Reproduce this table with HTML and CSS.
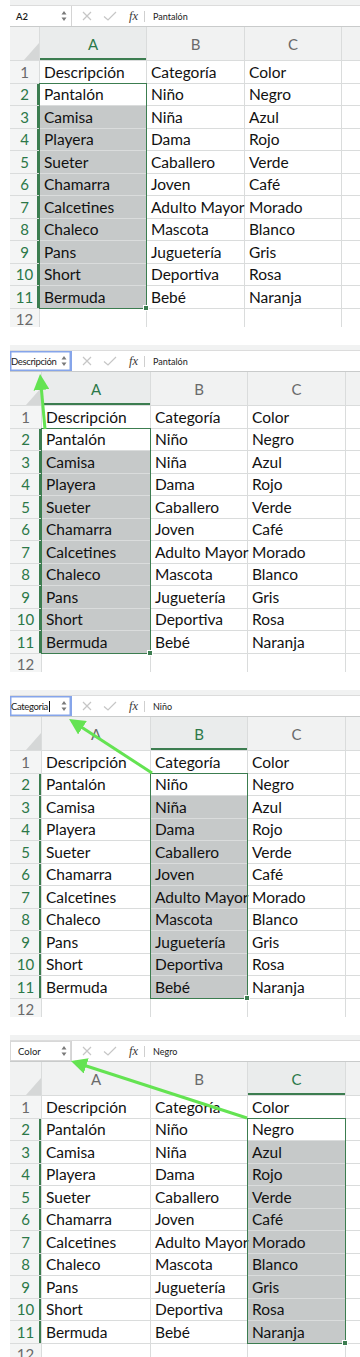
FILE: index.html
```html
<!DOCTYPE html>
<html lang="es">
<head>
<meta charset="utf-8">
<title>Excel cuadro de nombres</title>
<link rel="stylesheet" href="styles.css">
</head>
<body>
<main class="stack">

  <!-- Panel 1 -->
  <section class="sheet">
    <div class="fbar">
      <div class="namebox"><span class="nb-text">A2</span><svg class="spin" viewBox="0 0 6 12" width="6" height="12"><path d="M3 1 L5.5 4.6 L0.5 4.6Z M0.5 7.4 L5.5 7.4 L3 11Z"/></svg></div>
      <div class="fbtns">
        <svg class="ico-x" viewBox="0 0 10 10" width="10" height="10"><path d="M1 1 L9 9 M9 1 L1 9"/></svg>
        <svg class="ico-ok" viewBox="0 0 14 10" width="14" height="10"><path d="M1 5.5 L5 9 L13 1"/></svg>
        <span class="fx">fx</span>
      </div>
      <span class="fdiv"></span>
      <div class="finput">Pantalón</div>
    </div>
    <div class="grid grid--first">
      <div class="corner"></div><div class="ch on">A</div><div class="ch">B</div><div class="ch">C</div><div class="ch"></div>
      <div class="rh">1</div><div class="c">Descripción</div><div class="c">Categoría</div><div class="c">Color</div><div class="c"></div>
      <div class="rh on">2</div><div class="c">Pantalón</div><div class="c">Niño</div><div class="c">Negro</div><div class="c"></div>
      <div class="rh on">3</div><div class="c g">Camisa</div><div class="c">Niña</div><div class="c">Azul</div><div class="c"></div>
      <div class="rh on">4</div><div class="c g">Playera</div><div class="c">Dama</div><div class="c">Rojo</div><div class="c"></div>
      <div class="rh on">5</div><div class="c g">Sueter</div><div class="c">Caballero</div><div class="c">Verde</div><div class="c"></div>
      <div class="rh on">6</div><div class="c g">Chamarra</div><div class="c">Joven</div><div class="c">Café</div><div class="c"></div>
      <div class="rh on">7</div><div class="c g">Calcetines</div><div class="c ov">Adulto Mayor</div><div class="c">Morado</div><div class="c"></div>
      <div class="rh on">8</div><div class="c g">Chaleco</div><div class="c">Mascota</div><div class="c">Blanco</div><div class="c"></div>
      <div class="rh on">9</div><div class="c g">Pans</div><div class="c">Juguetería</div><div class="c">Gris</div><div class="c"></div>
      <div class="rh on">10</div><div class="c g">Short</div><div class="c">Deportiva</div><div class="c">Rosa</div><div class="c"></div>
      <div class="rh on">11</div><div class="c g">Bermuda</div><div class="c">Bebé</div><div class="c">Naranja</div><div class="c"></div>
      <div class="rh">12</div><div class="c"></div><div class="c"></div><div class="c"></div><div class="c"></div>
      <div class="selbox selbox--a"></div>
    </div>
  </section>

  <!-- Panel 2 -->
  <section class="sheet">
    <div class="fbar">
      <div class="namebox namebox--focus"><span class="nb-text nb-tight">Descripción</span><svg class="spin" viewBox="0 0 6 12" width="6" height="12"><path d="M3 1 L5.5 4.6 L0.5 4.6Z M0.5 7.4 L5.5 7.4 L3 11Z"/></svg></div>
      <div class="fbtns">
        <svg class="ico-x" viewBox="0 0 10 10" width="10" height="10"><path d="M1 1 L9 9 M9 1 L1 9"/></svg>
        <svg class="ico-ok" viewBox="0 0 14 10" width="14" height="10"><path d="M1 5.5 L5 9 L13 1"/></svg>
        <span class="fx">fx</span>
      </div>
      <span class="fdiv"></span>
      <div class="finput">Pantalón</div>
    </div>
    <div class="grid">
      <div class="corner"></div><div class="ch on">A</div><div class="ch">B</div><div class="ch">C</div><div class="ch"></div>
      <div class="rh">1</div><div class="c">Descripción</div><div class="c">Categoría</div><div class="c">Color</div><div class="c"></div>
      <div class="rh on">2</div><div class="c">Pantalón</div><div class="c">Niño</div><div class="c">Negro</div><div class="c"></div>
      <div class="rh on">3</div><div class="c g">Camisa</div><div class="c">Niña</div><div class="c">Azul</div><div class="c"></div>
      <div class="rh on">4</div><div class="c g">Playera</div><div class="c">Dama</div><div class="c">Rojo</div><div class="c"></div>
      <div class="rh on">5</div><div class="c g">Sueter</div><div class="c">Caballero</div><div class="c">Verde</div><div class="c"></div>
      <div class="rh on">6</div><div class="c g">Chamarra</div><div class="c">Joven</div><div class="c">Café</div><div class="c"></div>
      <div class="rh on">7</div><div class="c g">Calcetines</div><div class="c ov">Adulto Mayor</div><div class="c">Morado</div><div class="c"></div>
      <div class="rh on">8</div><div class="c g">Chaleco</div><div class="c">Mascota</div><div class="c">Blanco</div><div class="c"></div>
      <div class="rh on">9</div><div class="c g">Pans</div><div class="c">Juguetería</div><div class="c">Gris</div><div class="c"></div>
      <div class="rh on">10</div><div class="c g">Short</div><div class="c">Deportiva</div><div class="c">Rosa</div><div class="c"></div>
      <div class="rh on">11</div><div class="c g">Bermuda</div><div class="c">Bebé</div><div class="c">Naranja</div><div class="c"></div>
      <div class="rh">12</div><div class="c"></div><div class="c"></div><div class="c"></div><div class="c"></div>
      <div class="selbox selbox--a"></div>
    </div>
    <svg class="arrow" viewBox="0 0 350 327" width="350" height="327">
      <defs><marker id="ah2" markerUnits="userSpaceOnUse" markerWidth="16" markerHeight="16" viewBox="0 0 16 16" refX="12" refY="8" orient="auto"><path d="M0 0 L16 8 L0 16Z" class="ahead"/></marker></defs>
      <line x1="35" y1="84" x2="30.4" y2="33" class="ashaft" marker-end="url(#ah2)"/>
    </svg>
  </section>

  <!-- Panel 3 -->
  <section class="sheet">
    <div class="fbar">
      <div class="namebox namebox--focus"><span class="nb-text nb-tight">Categoria<span class="caret"></span></span><svg class="spin" viewBox="0 0 6 12" width="6" height="12"><path d="M3 1 L5.5 4.6 L0.5 4.6Z M0.5 7.4 L5.5 7.4 L3 11Z"/></svg></div>
      <div class="fbtns">
        <svg class="ico-x" viewBox="0 0 10 10" width="10" height="10"><path d="M1 1 L9 9 M9 1 L1 9"/></svg>
        <svg class="ico-ok" viewBox="0 0 14 10" width="14" height="10"><path d="M1 5.5 L5 9 L13 1"/></svg>
        <span class="fx">fx</span>
      </div>
      <span class="fdiv"></span>
      <div class="finput">Niño</div>
    </div>
    <div class="grid">
      <div class="corner"></div><div class="ch">A</div><div class="ch on">B</div><div class="ch">C</div><div class="ch"></div>
      <div class="rh">1</div><div class="c">Descripción</div><div class="c">Categoría</div><div class="c">Color</div><div class="c"></div>
      <div class="rh on">2</div><div class="c">Pantalón</div><div class="c">Niño</div><div class="c">Negro</div><div class="c"></div>
      <div class="rh on">3</div><div class="c">Camisa</div><div class="c g">Niña</div><div class="c">Azul</div><div class="c"></div>
      <div class="rh on">4</div><div class="c">Playera</div><div class="c g">Dama</div><div class="c">Rojo</div><div class="c"></div>
      <div class="rh on">5</div><div class="c">Sueter</div><div class="c g">Caballero</div><div class="c">Verde</div><div class="c"></div>
      <div class="rh on">6</div><div class="c">Chamarra</div><div class="c g">Joven</div><div class="c">Café</div><div class="c"></div>
      <div class="rh on">7</div><div class="c">Calcetines</div><div class="c g ov">Adulto Mayor</div><div class="c">Morado</div><div class="c"></div>
      <div class="rh on">8</div><div class="c">Chaleco</div><div class="c g">Mascota</div><div class="c">Blanco</div><div class="c"></div>
      <div class="rh on">9</div><div class="c">Pans</div><div class="c g">Juguetería</div><div class="c">Gris</div><div class="c"></div>
      <div class="rh on">10</div><div class="c">Short</div><div class="c g">Deportiva</div><div class="c">Rosa</div><div class="c"></div>
      <div class="rh on">11</div><div class="c">Bermuda</div><div class="c g">Bebé</div><div class="c">Naranja</div><div class="c"></div>
      <div class="rh">12</div><div class="c"></div><div class="c"></div><div class="c"></div><div class="c"></div>
      <div class="selbox selbox--b"></div>
    </div>
    <svg class="arrow" viewBox="0 0 350 327" width="350" height="327">
      <defs><marker id="ah3" markerUnits="userSpaceOnUse" markerWidth="16" markerHeight="16" viewBox="0 0 16 16" refX="12" refY="8" orient="auto"><path d="M0 0 L16 8 L0 16Z" class="ahead"/></marker></defs>
      <line x1="142" y1="83" x2="62.4" y2="31.2" class="ashaft" marker-end="url(#ah3)"/>
    </svg>
  </section>

  <!-- Panel 4 -->
  <section class="sheet">
    <div class="fbar">
      <div class="namebox namebox--plain"><span class="nb-text">Color</span><svg class="spin" viewBox="0 0 6 12" width="6" height="12"><path d="M3 1 L5.5 4.6 L0.5 4.6Z M0.5 7.4 L5.5 7.4 L3 11Z"/></svg></div>
      <div class="fbtns">
        <svg class="ico-x" viewBox="0 0 10 10" width="10" height="10"><path d="M1 1 L9 9 M9 1 L1 9"/></svg>
        <svg class="ico-ok" viewBox="0 0 14 10" width="14" height="10"><path d="M1 5.5 L5 9 L13 1"/></svg>
        <span class="fx">fx</span>
      </div>
      <span class="fdiv"></span>
      <div class="finput">Negro</div>
    </div>
    <div class="grid">
      <div class="corner"></div><div class="ch">A</div><div class="ch">B</div><div class="ch on">C</div><div class="ch"></div>
      <div class="rh">1</div><div class="c">Descripción</div><div class="c">Categoría</div><div class="c">Color</div><div class="c"></div>
      <div class="rh on">2</div><div class="c">Pantalón</div><div class="c">Niño</div><div class="c">Negro</div><div class="c"></div>
      <div class="rh on">3</div><div class="c">Camisa</div><div class="c">Niña</div><div class="c g">Azul</div><div class="c"></div>
      <div class="rh on">4</div><div class="c">Playera</div><div class="c">Dama</div><div class="c g">Rojo</div><div class="c"></div>
      <div class="rh on">5</div><div class="c">Sueter</div><div class="c">Caballero</div><div class="c g">Verde</div><div class="c"></div>
      <div class="rh on">6</div><div class="c">Chamarra</div><div class="c">Joven</div><div class="c g">Café</div><div class="c"></div>
      <div class="rh on">7</div><div class="c">Calcetines</div><div class="c ov">Adulto Mayor</div><div class="c g">Morado</div><div class="c"></div>
      <div class="rh on">8</div><div class="c">Chaleco</div><div class="c">Mascota</div><div class="c g">Blanco</div><div class="c"></div>
      <div class="rh on">9</div><div class="c">Pans</div><div class="c">Juguetería</div><div class="c g">Gris</div><div class="c"></div>
      <div class="rh on">10</div><div class="c">Short</div><div class="c">Deportiva</div><div class="c g">Rosa</div><div class="c"></div>
      <div class="rh on">11</div><div class="c">Bermuda</div><div class="c">Bebé</div><div class="c g">Naranja</div><div class="c"></div>
      <div class="rh">12</div><div class="c"></div><div class="c"></div><div class="c"></div><div class="c"></div>
      <div class="selbox selbox--c"></div>
    </div>
    <svg class="arrow" viewBox="0 0 350 327" width="350" height="327">
      <defs><marker id="ah4" markerUnits="userSpaceOnUse" markerWidth="16" markerHeight="16" viewBox="0 0 16 16" refX="12" refY="8" orient="auto"><path d="M0 0 L16 8 L0 16Z" class="ahead"/></marker></defs>
      <line x1="237" y1="83" x2="64.8" y2="27.2" class="ashaft" marker-end="url(#ah4)"/>
    </svg>
  </section>

</main>
</body>
</html>
```

FILE: styles.css
```css
html, body {
  margin: 0;
  padding: 0;
  background: #ffffff;
  overflow: hidden;
}

body {
  font-family: Lato, "Open Sans", "Liberation Sans", sans-serif;
  color: #111;
}

.stack {
  display: flex;
  flex-direction: column;
  gap: 18px;
  padding-left: 10px;
}

.sheet {
  position: relative;
  height: 327px;
  overflow: hidden;
  display: flex;
  flex-direction: column;
  background: #f1f2f2;
  padding-top: 5px;
  box-sizing: border-box;
  flex: none;
}

/* ---------- formula bar ---------- */
.fbar {
  height: 22px;
  flex: none;
  display: flex;
  align-items: center;
  background: #ffffff;
  border-top: 1px solid #dcdcdc;
  border-bottom: 1px solid #c9cbcb;
  box-sizing: border-box;
}

.namebox {
  width: 62px;
  height: 100%;
  flex: none;
  display: flex;
  align-items: center;
  justify-content: space-between;
  padding: 0 4px 0 6px;
  box-sizing: border-box;
  border-right: 1px solid #d4d4d4;
  font-size: 9.5px;
  font-weight: 600;
  color: #1a1a1a;
}

.namebox--focus {
  padding-left: 1px;
  font-weight: 400;
  box-shadow: inset 0 0 0 1.5px #86a5ea;
  border-right-color: #86a5ea;
}

.namebox--plain {
  padding-left: 8px;
  font-weight: 400;
  box-shadow: inset 0 0 0 1px #d8d8d8;
}

.nb-text {
  white-space: nowrap;
  display: flex;
  align-items: center;
}

.nb-tight {
  letter-spacing: -0.35px;
}

.caret {
  display: inline-block;
  width: 1px;
  height: 11px;
  background: #111;
  margin-left: 1px;
}

.spin path {
  fill: #7a7a7a;
}

.fbtns {
  display: flex;
  align-items: center;
  padding-left: 10px;
  gap: 11px;
}

.ico-x path,
.ico-ok path {
  fill: none;
  stroke: #c6c6c6;
  stroke-width: 1.2;
}

.fx {
  font-family: "Liberation Serif", "DejaVu Serif", serif;
  font-style: italic;
  font-size: 12.5px;
  color: #3a3a3a;
  margin-left: 1px;
}

.fdiv {
  width: 1px;
  height: 11px;
  background: #cfcfcf;
  margin: 0 8px 0 6px;
}

.finput {
  font-size: 9px;
  color: #222;
}

/* ---------- grid ---------- */
.grid {
  position: relative;
  display: grid;
  grid-template-columns: 31px 108px 96px 97px 1fr;
  grid-template-rows: 33px repeat(12, 21.5px);
  gap: 1px;
  background: #dadcdc;
}

.grid--first {
  grid-template-columns: 29px 106px 97px 96px 1fr;
}

.corner {
  position: relative;
  background: #f1f2f2;
}

.corner::after {
  content: "";
  position: absolute;
  right: 0;
  bottom: 0;
  width: 15px;
  height: 17px;
  background: #d5d7d7;
  clip-path: polygon(100% 0, 100% 100%, 0 100%);
}

.ch {
  background: #f1f2f2;
  color: #6a6a6a;
  font-size: 15px;
  display: flex;
  align-items: center;
  justify-content: center;
}

.ch.on {
  color: #2c7848;
  background: #eaecec;
  box-shadow: inset 0 -2px #3c7d50;
}

.rh {
  background: #f4f5f5;
  color: #6a6a6a;
  font-size: 15px;
  display: flex;
  align-items: center;
  justify-content: center;
}

.rh.on {
  color: #2c7848;
  box-shadow: inset -2px 0 #3c7d50;
}

.c {
  background: #ffffff;
  font-size: 15.5px;
  color: #111;
  display: flex;
  align-items: center;
  padding-left: 4px;
  white-space: nowrap;
  overflow: visible;
}

.c.ov {
  z-index: 1;
}

.c.g {
  background: #c6c9c9;
}

.selbox {
  position: absolute;
  grid-row: 3 / 13;
  inset: -1px;
  border: 1.5px solid #3c7d50;
  pointer-events: none;
  z-index: 1;
}

.selbox::after {
  content: "";
  position: absolute;
  right: -3px;
  bottom: -3px;
  width: 4px;
  height: 4px;
  background: #3c7d50;
  border: 1px solid #ffffff;
}

.selbox--a { grid-column: 2 / 3; }
.selbox--b { grid-column: 3 / 4; }
.selbox--c { grid-column: 4 / 5; }

/* ---------- annotation arrows ---------- */
.arrow {
  position: absolute;
  left: 0;
  top: 0;
  pointer-events: none;
  z-index: 2;
}

.ashaft {
  stroke: #64e352;
  stroke-width: 3;
}

.ahead {
  fill: #64e352;
}
```
